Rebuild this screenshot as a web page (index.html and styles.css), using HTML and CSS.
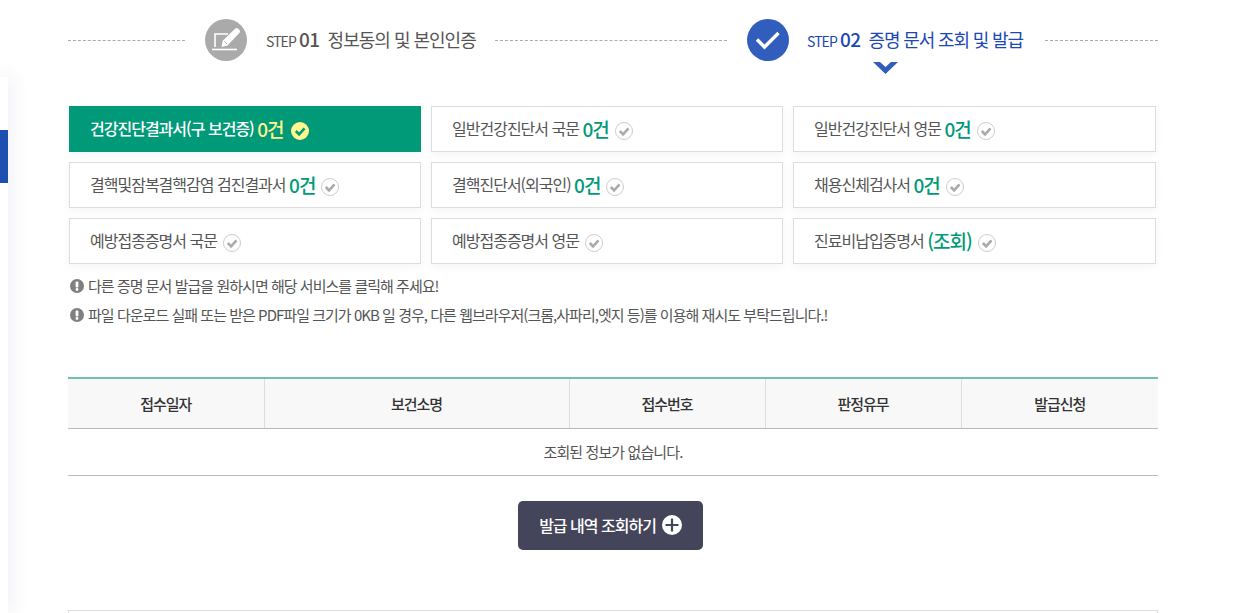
FILE: index.html
```html
<!DOCTYPE html>
<html lang="ko">
<head>
<meta charset="utf-8">
<title>증명 문서 조회 및 발급</title>
<link rel="stylesheet" href="styles.css">
</head>
<body>
<aside class="side"><span class="side-mark"></span></aside>
<main class="wrap">
  <div class="steps">
    <span class="rule rule-a"></span>
    <span class="disc disc-off">
      <svg width="42" height="42" viewBox="0 0 42 42"><path d="M23 15H10V28" fill="none" stroke="#fff" stroke-width="1.600"/><path d="M7 30.500H32" fill="none" stroke="#fff" stroke-width="1.600"/><path d="M16.500 28l1.200-6.200L30.300 9.500a2 2 0 0 1 2.700 0l1.500 1.500a2 2 0 0 1 0 2.700L22.500 26.500z" fill="#fff"/><path d="M19.500 22.500l2.500 2.500" stroke="#aaa" stroke-width="1"/></svg>
    </span>
    <span class="step-text step-off"><span class="step-label">STEP</span> <b class="step-num">01</b><span class="step-title">정보동의 및 본인인증</span></span>
    <span class="rule rule-b"></span>
    <span class="disc disc-on">
      <svg width="42" height="42" viewBox="0 0 42 42"><path d="M10 20.500l7.500 7.500 14-14" fill="none" stroke="#fff" stroke-width="3.400"/></svg>
    </span>
    <span class="step-text step-on"><span class="step-label">STEP</span> <b class="step-num">02</b><span class="step-title">증명 문서 조회 및 발급</span>
      <svg class="chevron" width="25" height="12" viewBox="0 0 25 12"><path d="M0 0h7l5.500 5 5.500-5h7L12.500 12z" fill="#315dbd"/></svg>
    </span>
    <span class="rule rule-c"></span>
  </div>

  <div class="tabs">
    <a class="tab tab-on">건강진단결과서(구 보건증) <b class="count">0건</b><svg class="tick" width="18" height="18" viewBox="0 0 18 18"><circle cx="9" cy="9" r="9" fill="#fff68f"/><path d="M4.800 9l3.300 3.300 5.400-6" fill="none" stroke="#009a78" stroke-width="2.600"/></svg></a>
    <a class="tab">일반건강진단서 국문 <b class="count">0건</b><svg class="tick" width="18" height="18" viewBox="0 0 18 18"><circle cx="9" cy="9" r="8.500" fill="#fff" stroke="#ccc"/><path d="M4.800 9l3.300 3.300 5.400-6" fill="none" stroke="#aaa" stroke-width="2.600"/></svg></a>
    <a class="tab">일반건강진단서 영문 <b class="count">0건</b><svg class="tick" width="18" height="18" viewBox="0 0 18 18"><circle cx="9" cy="9" r="8.500" fill="#fff" stroke="#ccc"/><path d="M4.800 9l3.300 3.300 5.400-6" fill="none" stroke="#aaa" stroke-width="2.600"/></svg></a>
    <a class="tab">결핵및잠복결핵감염 검진결과서 <b class="count">0건</b><svg class="tick" width="18" height="18" viewBox="0 0 18 18"><circle cx="9" cy="9" r="8.500" fill="#fff" stroke="#ccc"/><path d="M4.800 9l3.300 3.300 5.400-6" fill="none" stroke="#aaa" stroke-width="2.600"/></svg></a>
    <a class="tab">결핵진단서(외국인) <b class="count">0건</b><svg class="tick" width="18" height="18" viewBox="0 0 18 18"><circle cx="9" cy="9" r="8.500" fill="#fff" stroke="#ccc"/><path d="M4.800 9l3.300 3.300 5.400-6" fill="none" stroke="#aaa" stroke-width="2.600"/></svg></a>
    <a class="tab">채용신체검사서 <b class="count">0건</b><svg class="tick" width="18" height="18" viewBox="0 0 18 18"><circle cx="9" cy="9" r="8.500" fill="#fff" stroke="#ccc"/><path d="M4.800 9l3.300 3.300 5.400-6" fill="none" stroke="#aaa" stroke-width="2.600"/></svg></a>
    <a class="tab">예방접종증명서 국문<svg class="tick" width="18" height="18" viewBox="0 0 18 18"><circle cx="9" cy="9" r="8.500" fill="#fff" stroke="#ccc"/><path d="M4.800 9l3.300 3.300 5.400-6" fill="none" stroke="#aaa" stroke-width="2.600"/></svg></a>
    <a class="tab">예방접종증명서 영문<svg class="tick" width="18" height="18" viewBox="0 0 18 18"><circle cx="9" cy="9" r="8.500" fill="#fff" stroke="#ccc"/><path d="M4.800 9l3.300 3.300 5.400-6" fill="none" stroke="#aaa" stroke-width="2.600"/></svg></a>
    <a class="tab">진료비납입증명서 <b class="count">(조회)</b><svg class="tick" width="18" height="18" viewBox="0 0 18 18"><circle cx="9" cy="9" r="8.500" fill="#fff" stroke="#ccc"/><path d="M4.800 9l3.300 3.300 5.400-6" fill="none" stroke="#aaa" stroke-width="2.600"/></svg></a>
  </div>

  <ul class="notes">
    <li class="note"><svg class="bang" width="14" height="14" viewBox="0 0 14 14"><circle cx="7" cy="7" r="7" fill="#808080"/><rect x="5.600" y="2.600" width="2.800" height="5.800" rx="1" fill="#fff"/><circle cx="7" cy="10.500" r="1.400" fill="#fff"/></svg>다른 증명 문서 발급을 원하시면 해당 서비스를 클릭해 주세요!</li>
    <li class="note"><svg class="bang" width="14" height="14" viewBox="0 0 14 14"><circle cx="7" cy="7" r="7" fill="#808080"/><rect x="5.600" y="2.600" width="2.800" height="5.800" rx="1" fill="#fff"/><circle cx="7" cy="10.500" r="1.400" fill="#fff"/></svg>파일 다운로드 실패 또는 받은 PDF파일 크기가 0KB 일 경우, 다른 웹브라우저(크롬,사파리,엣지 등)를 이용해 재시도 부탁드립니다.!</li>
  </ul>

  <table class="grid">
    <colgroup><col class="c1"><col class="c2"><col class="c3"><col class="c4"><col class="c5"></colgroup>
    <thead>
      <tr><th>접수일자</th><th>보건소명</th><th>접수번호</th><th>판정유무</th><th>발급신청</th></tr>
    </thead>
    <tbody>
      <tr><td colspan="5">조회된 정보가 없습니다.</td></tr>
    </tbody>
  </table>

  <div class="actions">
    <button class="more" type="button">발급 내역 조회하기<svg width="20" height="20" viewBox="0 0 20 20"><circle cx="10" cy="10" r="10" fill="#fff"/><path d="M10 3.500v13M3.500 10h13" stroke="#44445a" stroke-width="2.200"/></svg></button>
  </div>

  <div class="next-box"></div>
</main>
</body>
</html>
```

FILE: styles.css
```css
* { box-sizing: border-box; }
html, body { margin: 0; padding: 0; height: 613px; overflow: hidden; background: #fff; }
body { font-family: "Noto Sans CJK KR", "Noto Sans", sans-serif; color: #555; position: relative; }

.side { position: absolute; left: 0; top: 77px; width: 8px; height: 536px; background: #fff; box-shadow: 0 0 20px rgba(40, 60, 120, .16); }
.side-mark { position: absolute; left: 0; top: 53px; width: 8px; height: 53px; background: #1d4fb0; }

.wrap { width: 1090px; margin-left: 68px; padding-top: 19px; }

.steps { display: flex; align-items: center; height: 42px; position: relative; }
.rule { height: 0; border-top: 1px dashed #aaa; }
.rule-a { width: 117px; margin-right: 20px; }
.rule-b { width: 232px; margin-right: 20px; }
.rule-c { flex: 1; }
.disc { width: 42px; height: 42px; border-radius: 50%; display: block; flex: none; }
.disc svg { display: block; }
.disc-off { background: #aaa; }
.disc-on { background: #315dbd; }
.step-text { display: flex; align-items: baseline; position: relative; white-space: nowrap; margin-bottom: 4px; }
.step-off { width: 229px; margin-left: 19px; color: #555; }
.step-on { width: 238px; margin-left: 18px; color: #1d47b5; }
.step-label { font-size: 14px; letter-spacing: -.9px; margin-right: 3px; }
.step-num { font-size: 19px; font-weight: 500; letter-spacing: -.5px; margin-right: 8px; }
.step-title { font-size: 18px; font-weight: 400; letter-spacing: -1px; }
.step-on .step-title { letter-spacing: -1.15px; }
.chevron { position: absolute; left: 66px; top: 37px; }

.tabs { display: grid; grid-template-columns: 352px 352px 363px; grid-auto-rows: 46px; column-gap: 10px; row-gap: 10px; margin: 45px 0 0 1px; }
.tab { display: flex; align-items: center; padding: 0 0 2px 20px; border: 1px solid #ddd; background: #fff; font-size: 16px; letter-spacing: -1px; color: #555; white-space: pre; box-shadow: 0 3px 8px rgba(40, 60, 120, .05); }
.tab-on { background: #009a78; border-color: #009a78; color: #fff; font-weight: 500; }
.count { font-size: 19px; font-weight: 500; color: #009a78; }
.tab-on .count { color: #fff68f; }
.tick { margin: 6px 0 0 6px; flex: none; }
.tab-on .tick { margin-left: 7px; }

.notes { list-style: none; margin: 7px 0 0 2px; padding: 0; }
.note { display: flex; align-items: center; height: 29px; font-size: 15px; letter-spacing: -.97px; color: #555; white-space: nowrap; }
.bang { margin-right: 4px; flex: none; }

.grid { width: 1090px; margin-top: 48px; border-collapse: collapse; table-layout: fixed; border-top: 2px solid #6fc2ae; }
.c1 { width: 196px; }
.c2 { width: 305px; }
.c3 { width: 196px; }
.c4 { width: 196px; }
.c5 { width: 197px; }
.grid th { height: 50px; padding: 0; background: #f8f8f8; font-size: 15px; font-weight: 500; color: #333; letter-spacing: -1px; border-bottom: 1px solid #bbb; border-left: 1px solid #ddd; }
.grid th:first-child { border-left: 0; }
.grid td { height: 47px; padding: 0; text-align: center; font-size: 15px; color: #555; letter-spacing: -.9px; border-bottom: 1px solid #bbb; }

.actions { display: flex; justify-content: center; margin-top: 25px; padding-right: 5px; }
.more { display: flex; align-items: center; gap: 6px; height: 49px; width: 185px; justify-content: center; padding: 0; border: 0; border-radius: 5px; background: #44445a; color: #fff; font-family: inherit; font-size: 16px; font-weight: 500; letter-spacing: -1px; }

.next-box { height: 40px; margin-top: 60px; border: 1px solid #ddd; }
```
